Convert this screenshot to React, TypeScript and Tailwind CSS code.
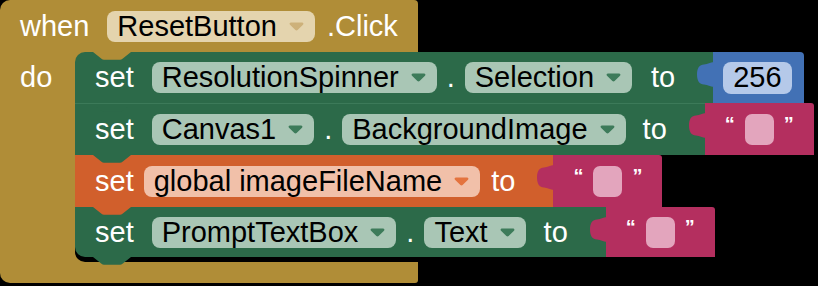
type Tone = "gold" | "green" | "orange";

const fieldBg: Record<Tone, string> = {
  gold: "bg-[#e4d4ae]",
  green: "bg-[#a9c6b5]",
  orange: "bg-[#f1c0a9]",
};

const arrowFill: Record<Tone, string> = {
  gold: "#cdb17a",
  green: "#3d7b5a",
  orange: "#e4733e",
};

function Arrow({ fill }: { fill: string }) {
  return (
    <svg aria-hidden="true" width="15" height="9" viewBox="0 0 15 9" className="shrink-0">
      <path d="M2 0.5h11c1.3 0 1.9 1.4 1 2.3L8.6 8c-.6.6-1.6.6-2.2 0L1 2.8C.1 1.9.7.5 2 .5Z" fill={fill} />
    </svg>
  );
}

function Field({ label, tone, className = "" }: { label: string; tone: Tone; className?: string }) {
  return (
    <span
      className={`flex h-[31px] shrink-0 items-center gap-[12px] rounded-[8px] pl-[10px] pr-[11px] text-black ${fieldBg[tone]} ${className}`}
    >
      {label}
      <Arrow fill={arrowFill[tone]} />
    </span>
  );
}

// the little tab the block above pushes into the one below
function Notch({ fill, bottom = false }: { fill: string; bottom?: boolean }) {
  return (
    <svg
      aria-hidden="true"
      className={`absolute left-[18px] z-10 ${bottom ? "top-full" : "top-0"}`}
      width="38"
      height="8"
      viewBox="0 0 38 8"
    >
      <path d="M0 0L8.5 6.8Q9.6 7.8 11 7.8H27Q28.4 7.8 29.5 6.8L38 0Z" fill={fill} />
    </svg>
  );
}

function Socket({ fill }: { fill: string }) {
  return (
    <svg
      aria-hidden="true"
      className="absolute -left-[16px] top-[10px]"
      width="17"
      height="25"
      viewBox="0 0 17 25"
    >
      <path d="M17 0C13 0 11 2.5 7 2.5C2.5 2.5 0 6 0 12.5S2.5 22.5 7 22.5C11 22.5 13 25 17 25Z" fill={fill} />
    </svg>
  );
}

function TextBlock() {
  return (
    <div className="relative flex shrink-0 items-center gap-[10px] rounded-tr-[3px] bg-[#b42f5f] pl-[20px] pr-[20px]">
      <Socket fill="#b42f5f" />
      <span className="mb-[10px] text-[20px] font-bold leading-none text-white">“</span>
      <span className="h-[31px] w-[29px] rounded-[7px] bg-[#e3a5bd]" />
      <span className="mb-[10px] text-[20px] font-bold leading-none text-white">”</span>
    </div>
  );
}

function NumberBlock({ value }: { value: string }) {
  return (
    <div className="relative flex shrink-0 items-center rounded-tr-[4px] bg-[#4271b5] pl-[10px] pr-[12px]">
      <Socket fill="#4271b5" />
      <span className="flex h-[32px] items-center rounded-[8px] bg-[#b5c9e9] px-[10px] text-black">{value}</span>
    </div>
  );
}

function Dot() {
  return <span className="mx-[10px] text-white">.</span>;
}

export default function App() {
  return (
    <div className="h-[286px] w-[818px] overflow-hidden bg-black font-['Liberation_Sans',Arial,sans-serif] text-[29px] leading-none">
      <div className="flex w-[418px] flex-col">
        <div className="flex h-[52px] items-center rounded-tl-[10px] rounded-tr-[4px] bg-[#b08d37] pl-[20px]">
          <span className="text-white">when</span>
          <Field label="ResetButton" tone="gold" className="ml-[18px]" />
          <span className="ml-[12px] text-white">.Click</span>
        </div>

        <div className="flex bg-[#b08d37]">
          <div className="w-[75px] shrink-0">
            <div className="flex h-[51px] items-center pl-[20px] text-white">do</div>
          </div>

          <div className="flex w-max shrink-0 flex-col pb-[5px]">
            <div className="flex h-[51px]">
              <div className="relative flex items-center rounded-tl-[10px] bg-[#2c6a49] pl-[20px] pr-[38px] text-white">
                <Notch fill="#b08d37" />
                <span>set</span>
                <Field label="ResolutionSpinner" tone="green" className="ml-[18px]" />
                <Dot />
                <Field label="Selection" tone="green" />
                <span className="ml-[19px]">to</span>
              </div>
              <NumberBlock value="256" />
            </div>

            <div className="flex h-[52px]">
              <div className="relative flex items-center border-t border-[#3c7a59] bg-[#2c6a49] pl-[20px] pr-[38px] text-white">
                <Notch fill="#2c6a49" />
                <span>set</span>
                <Field label="Canvas1" tone="green" className="ml-[18px]" />
                <Dot />
                <Field label="BackgroundImage" tone="green" />
                <span className="ml-[17px]">to</span>
              </div>
              <TextBlock />
            </div>

            <div className="flex h-[52px]">
              <div className="relative flex items-center bg-[#d15f2c] pl-[20px] pr-[38px] text-white">
                <Notch fill="#2c6a49" />
                <span>set</span>
                <Field label="global imageFileName" tone="orange" className="ml-[10px]" />
                <span className="ml-[11px]">to</span>
              </div>
              <TextBlock />
            </div>

            <div className="flex h-[50px]">
              <div className="relative flex items-center rounded-bl-[10px] bg-[#2c6a49] pl-[20px] pr-[38px] text-white shadow-[0_5px_0_#000]">
                <Notch fill="#d15f2c" />
                <Notch fill="#2c6a49" bottom />
                <span>set</span>
                <Field label="PromptTextBox" tone="green" className="ml-[18px]" />
                <Dot />
                <Field label="Text" tone="green" />
                <span className="ml-[18px]">to</span>
              </div>
              <TextBlock />
            </div>
          </div>
        </div>

        <div className="h-[21px] rounded-bl-[10px] rounded-br-[3px] bg-[#b08d37]" />
      </div>
    </div>
  );
}
